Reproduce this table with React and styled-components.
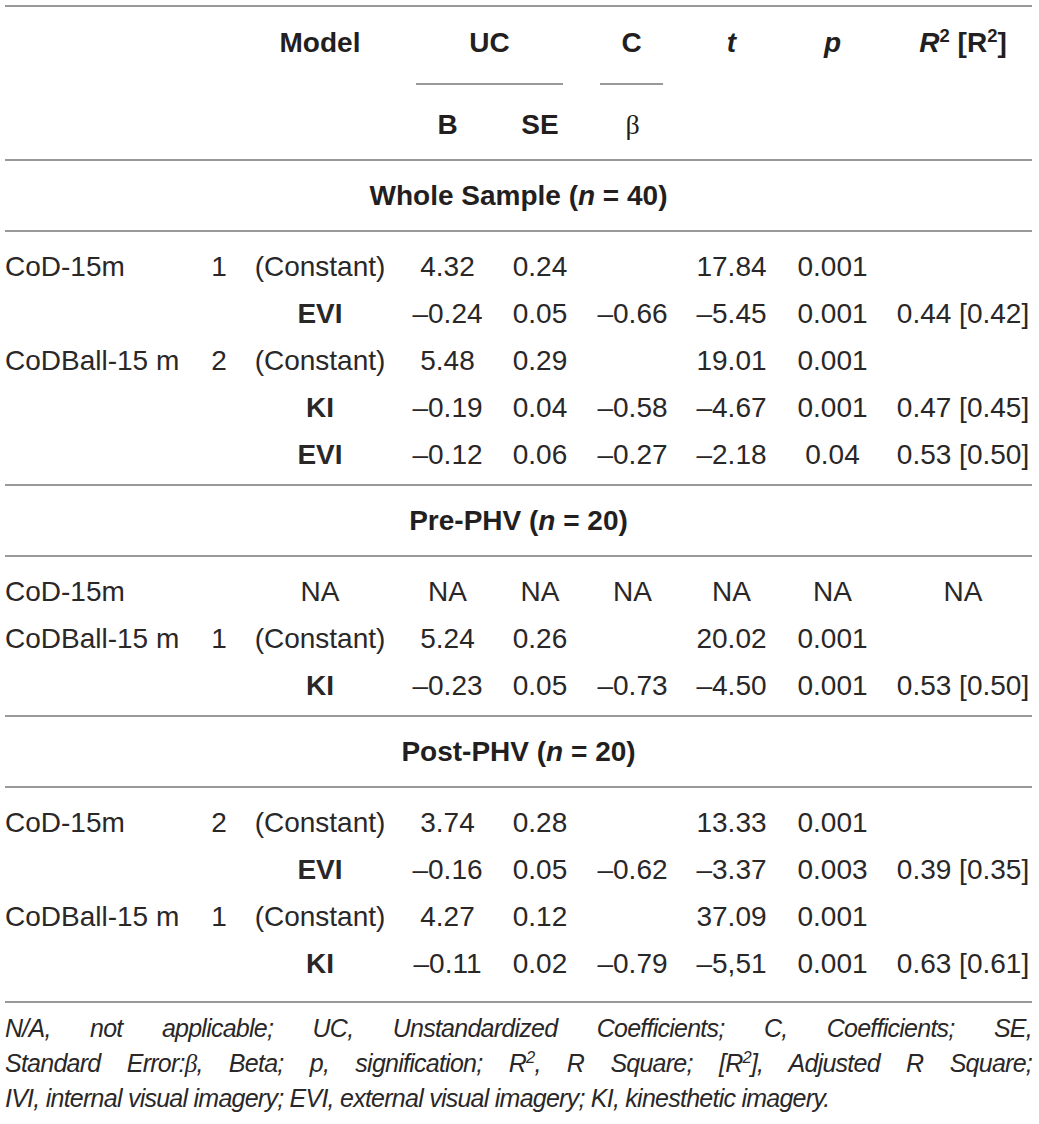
import styled, { createGlobalStyle } from "styled-components";

const GlobalStyle = createGlobalStyle`
  body {
    margin: 0;
    background: #fff;
  }
`;

const Page = styled.div`
  padding: 5px 7px 20px 5px;
  font-family: "Liberation Sans", Arial, sans-serif;
  color: #231f20;
`;

const Table = styled.table`
  width: 100%;
  border-collapse: collapse;
  table-layout: fixed;
  border-top: 2px solid #999;
  border-bottom: 2px solid #999;
  font-size: 28px;
`;

const HeadRow = styled.tr`
  border-bottom: ${(p) => (p.$ruled ? "2px solid #999" : "none")};
`;

const HeadCell = styled.th`
  font-weight: 700;
  text-align: center;
  vertical-align: top;
  line-height: 48px;
  white-space: nowrap;
  padding: ${(p) => p.$pad || "0"};
`;

const Underlined = styled.div`
  margin: 0 ${(p) => p.$right}px 0 ${(p) => p.$left}px;
  padding-bottom: 16px;
  border-bottom: 2px solid #999;
`;

const SectionRow = styled.tr`
  border-top: 2px solid #999;
  border-bottom: 2px solid #999;
`;

const SectionCell = styled.th`
  font-weight: 700;
  text-align: center;
  line-height: 47px;
  padding: 11px 0;
`;

const Cell = styled.td`
  line-height: 47px;
  white-space: nowrap;
  color: #2a2728;
  text-align: ${(p) => (p.$left ? "left" : "center")};
  font-weight: ${(p) => (p.$bold ? 700 : 400)};
  padding-top: ${(p) => (p.$first ? "11px" : "0")};
  padding-bottom: ${(p) => p.$bottom || 0}px;
  padding-left: ${(p) => (p.$shift ? "12px" : "0")};
  padding-right: 0;
`;

const Ital = styled.i`
  font-style: italic;
`;

const Beta = styled.span`
  font-family: "Liberation Serif", "Times New Roman", serif;
  font-weight: 400;
`;

const Sup = styled.sup`
  font-size: 0.66em;
  line-height: 0;
  vertical-align: 0.55em;
`;

const Note = styled.div`
  margin-top: 8px;
  font-size: 25px;
  font-style: italic;
  line-height: 35px;
  letter-spacing: -0.75px;
  color: #2a2728;
`;

const NoteLine = styled.div`
  text-align: ${(p) => (p.$justify ? "justify" : "left")};
  text-align-last: ${(p) => (p.$justify ? "justify" : "left")};
`;

const widths = [193, 42, 160, 95, 90, 95, 103, 99, 150];

const sections = [
  {
    title: "Whole Sample",
    n: 40,
    rows: [
      ["CoD-15m", "1", "(Constant)", "4.32", "0.24", "", "17.84", "0.001", ""],
      ["", "", "EVI", "–0.24", "0.05", "–0.66", "–5.45", "0.001", "0.44 [0.42]"],
      ["CoDBall-15 m", "2", "(Constant)", "5.48", "0.29", "", "19.01", "0.001", ""],
      ["", "", "KI", "–0.19", "0.04", "–0.58", "–4.67", "0.001", "0.47 [0.45]"],
      ["", "", "EVI", "–0.12", "0.06", "–0.27", "–2.18", "0.04", "0.53 [0.50]"],
    ],
  },
  {
    title: "Pre-PHV",
    n: 20,
    rows: [
      ["CoD-15m", "", "NA", "NA", "NA", "NA", "NA", "NA", "NA"],
      ["CoDBall-15 m", "1", "(Constant)", "5.24", "0.26", "", "20.02", "0.001", ""],
      ["", "", "KI", "–0.23", "0.05", "–0.73", "–4.50", "0.001", "0.53 [0.50]"],
    ],
  },
  {
    title: "Post-PHV",
    n: 20,
    rows: [
      ["CoD-15m", "2", "(Constant)", "3.74", "0.28", "", "13.33", "0.001", ""],
      ["", "", "EVI", "–0.16", "0.05", "–0.62", "–3.37", "0.003", "0.39 [0.35]"],
      ["CoDBall-15 m", "1", "(Constant)", "4.27", "0.12", "", "37.09", "0.001", ""],
      ["", "", "KI", "–0.11", "0.02", "–0.79", "–5,51", "0.001", "0.63 [0.61]"],
    ],
  },
];

const App = () => {
  return (
    <Page>
      <GlobalStyle />
      <Table>
        <colgroup>
          {widths.map((w, i) => (
            <col key={i} style={{ width: w }} />
          ))}
        </colgroup>
        <thead>
          <HeadRow>
            <HeadCell $pad="12px 0 0" />
            <HeadCell $pad="12px 0 0" />
            <HeadCell $pad="12px 0 0">Model</HeadCell>
            <HeadCell $pad="12px 0 0" colSpan={2}>
              <Underlined $left={16} $right={22}>UC</Underlined>
            </HeadCell>
            <HeadCell $pad="12px 0 0">
              <Underlined $left={15} $right={17}>C</Underlined>
            </HeadCell>
            <HeadCell $pad="12px 0 0">
              <Ital>t</Ital>
            </HeadCell>
            <HeadCell $pad="12px 0 0">
              <Ital>p</Ital>
            </HeadCell>
            <HeadCell $pad="12px 0 0 12px">
              <Ital>R</Ital>
              <Sup>2</Sup> [R<Sup>2</Sup>]
            </HeadCell>
          </HeadRow>
          <HeadRow $ruled>
            <HeadCell $pad="16px 0 10px" />
            <HeadCell $pad="16px 0 10px" />
            <HeadCell $pad="16px 0 10px" />
            <HeadCell $pad="16px 0 10px">B</HeadCell>
            <HeadCell $pad="16px 0 10px">SE</HeadCell>
            <HeadCell $pad="16px 0 10px">
              <Beta>β</Beta>
            </HeadCell>
            <HeadCell $pad="16px 0 10px" />
            <HeadCell $pad="16px 0 10px" />
            <HeadCell $pad="16px 0 10px" />
          </HeadRow>
        </thead>
        {sections.map((s, si) => (
          <tbody key={s.title}>
            <SectionRow>
              <SectionCell colSpan={9}>
                {s.title} (<Ital>n</Ital> = {s.n})
              </SectionCell>
            </SectionRow>
            {s.rows.map((r, ri) => {
              const isLast = ri === s.rows.length - 1;
              const bottom = isLast ? (si === sections.length - 1 ? 14 : 6) : 0;
              return (
                <tr key={ri}>
                  {r.map((v, ci) => (
                    <Cell
                      key={ci}
                      $left={ci === 0}
                      $bold={ci === 2 && (v === "EVI" || v === "KI")}
                      $shift={ci === 8}
                      $first={ri === 0}
                      $bottom={bottom}
                    >
                      {v}
                    </Cell>
                  ))}
                </tr>
              );
            })}
          </tbody>
        ))}
      </Table>
      <Note>
        <NoteLine $justify>
          N/A, not applicable; UC, Unstandardized Coefficients; C, Coefficients; SE,
        </NoteLine>
        <NoteLine $justify>
          Standard Error:<Beta>β</Beta>, Beta; p, signification; R<Sup>2</Sup>, R Square; [R
          <Sup>2</Sup>], Adjusted R Square;
        </NoteLine>
        <NoteLine>
          IVI, internal visual imagery; EVI, external visual imagery; KI, kinesthetic imagery.
        </NoteLine>
      </Note>
    </Page>
  );
};

export default App;
